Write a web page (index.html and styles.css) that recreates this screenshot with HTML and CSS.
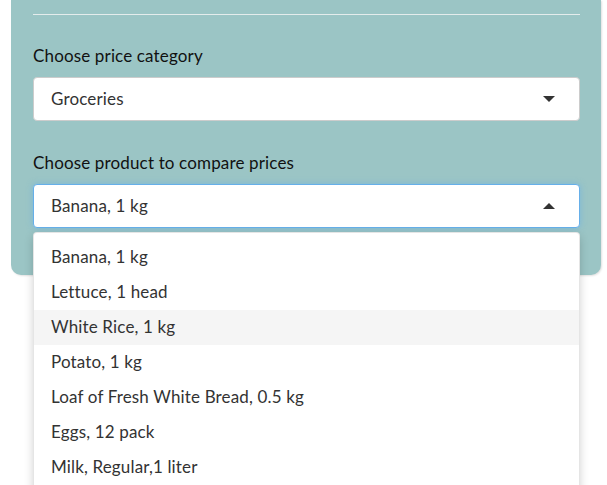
FILE: index.html
```html
<!DOCTYPE html>
<html>
<head>
<meta charset="utf-8">
<link rel="stylesheet" href="styles.css">
</head>
<body>
<div class="panel">
  <div class="rule"></div>
  <div class="field">
    <div class="label">Choose price category</div>
    <div class="select">
      <span>Groceries</span>
      <span class="caret down"></span>
    </div>
  </div>
  <div class="field second">
    <div class="label">Choose product to compare prices</div>
    <div class="select open">
      <span>Banana, 1 kg</span>
      <span class="caret up"></span>
    </div>
    <ul class="menu">
      <li>Banana, 1 kg</li>
      <li>Lettuce, 1 head</li>
      <li class="active">White Rice, 1 kg</li>
      <li>Potato, 1 kg</li>
      <li>Loaf of Fresh White Bread, 0.5 kg</li>
      <li>Eggs, 12 pack</li>
      <li>Milk, Regular,1 liter</li>
    </ul>
  </div>
</div>
</body>
</html>
```
FILE: styles.css
```css
html, body {
  margin: 0;
  padding: 0;
  background: #ffffff;
  overflow: hidden;
  height: 485px;
}
body {
  font-family: "Lato", "Liberation Sans", sans-serif;
  font-size: 17px;
  letter-spacing: 0.15px;
  color: #111;
}
.panel {
  position: relative;
  width: 590px;
  margin-left: 11px;
  box-sizing: border-box;
  background: #9bc5c5;
  padding: 14px 21px 47px 22px;
  border-radius: 0 0 10px 10px;
  box-shadow: 1px 1px 2px rgba(0,0,0,0.12);
}
.rule {
  height: 1px;
  background: #e4ecec;
  margin-bottom: 30px;
}
.field {
  position: relative;
}
.field.second {
  margin-top: 31px;
}
.label {
  line-height: 20px;
  height: 20px;
  padding-top: 1px;
  margin-bottom: 11px;
  color: #111;
}
.select {
  height: 44px;
  box-sizing: border-box;
  background: #fff;
  border: 1px solid #cccccc;
  border-radius: 4px;
  display: flex;
  align-items: center;
  justify-content: space-between;
  padding: 0 24px 1px 17px;
  color: #333;
}
.select.open {
  border-color: #66afe9;
  box-shadow: 0 0 6px rgba(102,175,233,0.6);
}
.caret {
  width: 0;
  height: 0;
  border-left: 6px solid transparent;
  border-right: 6px solid transparent;
}
.caret.down {
  border-top: 6px solid #333;
}
.caret.up {
  border-bottom: 6px solid #333;
}
.menu {
  position: absolute;
  left: 0;
  right: 0;
  top: 80px;
  margin: 0;
  padding: 7px 0 40px 0;
  list-style: none;
  background: #fff;
  border: 1px solid rgba(0,0,0,0.1);
  border-radius: 4px;
  box-shadow: 0 4px 10px rgba(0,0,0,0.18);
  z-index: 5;
}
.menu li {
  height: 35px;
  line-height: 33px;
  padding-left: 17px;
  color: #333;
}
.menu li.active {
  background: #f5f5f5;
}
```
